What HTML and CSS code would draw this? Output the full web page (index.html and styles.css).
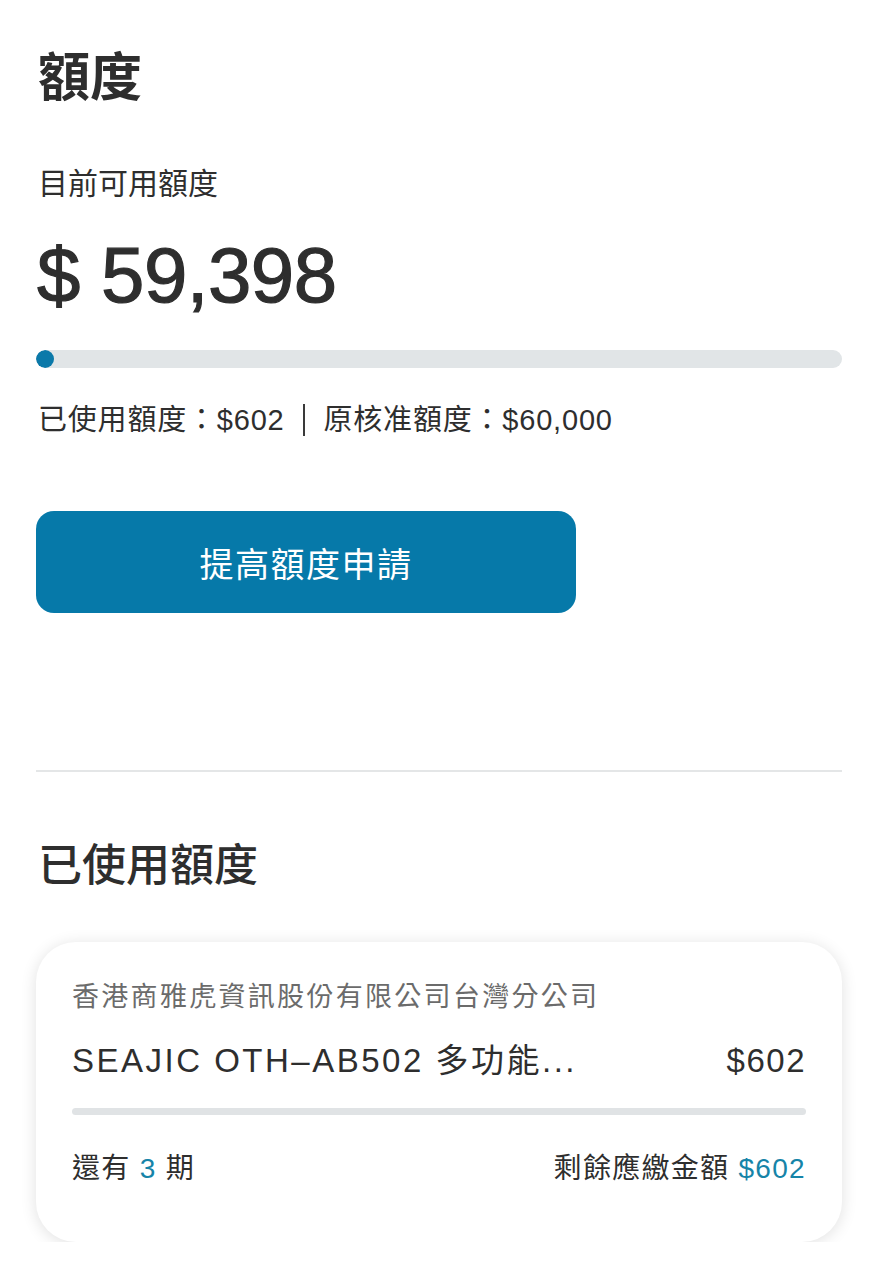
FILE: index.html
```html
<!DOCTYPE html>
<html lang="zh-Hant">
<head>
  <meta charset="UTF-8" />
  <meta name="viewport" content="width=device-width, initial-scale=1.0" />
  <title>額度</title>
  <link rel="stylesheet" href="styles.css">
</head>
<body>
  <section class="quota">
    <h1>額度</h1>
    <p class="label">目前可用額度</p>
    <div class="amount">$ 59,398</div>
    <div class="bar">
      <div class="bar-fill" style="width: 2.2%"></div>
    </div>
    <p class="stats">已使用額度：$602<span class="sep"></span>原核准額度：$60,000</p>
    <button class="btn">提高額度申請</button>
  </section>

  <hr class="divider" />

  <section class="used">
    <h2>已使用額度</h2>
    <div class="card">
      <p class="merchant">香港商雅虎資訊股份有限公司台灣分公司</p>
      <div class="item">
        <span class="item-name">SEAJIC OTH–AB502 多功能...</span>
        <span class="item-price">$602</span>
      </div>
      <div class="item-bar"></div>
      <div class="item-foot">
        <span>還有 <em>3</em> 期</span>
        <span>剩餘應繳金額 <em>$602</em></span>
      </div>
    </div>
  </section>
</body>
</html>
```

FILE: styles.css
```css
body {
  font-family: "Liberation Sans", "Noto Sans CJK TC", sans-serif;
  margin: 0;
  padding: 0 36px;
  color: #2e2e2e;
  background: #fff;
}
h1 {
  font-size: 52px;
  font-weight: 700;
  line-height: 1.2;
  margin: 47px 2px 0;
}
.label {
  font-size: 30px;
  line-height: 1.3;
  margin: 55px 2px 0;
}
.amount {
  font-size: 78px;
  line-height: 1;
  letter-spacing: -0.5px;
  -webkit-text-stroke: 1.2px #2e2e2e;
  margin: 33px 0 0 1px;
}
.bar {
  height: 18px;
  background: #e1e5e7;
  border-radius: 9px;
  margin-top: 36px;
  overflow: hidden;
}
.bar-fill {
  height: 100%;
  background: #0b79a9;
  border-radius: 9px;
}
.stats {
  font-size: 29px;
  line-height: 1.3;
  letter-spacing: 0.8px;
  margin: 34px 2px 0;
}
.sep {
  display: inline-block;
  width: 2px;
  height: 32px;
  background: #3a3a3a;
  margin: 0 19px 0 18px;
  vertical-align: -6px;
}
.btn {
  display: block;
  width: 540px;
  height: 102px;
  margin-top: 71px;
  border: 0;
  border-radius: 18px;
  background: #0679a9;
  color: #fff;
  font-family: inherit;
  font-size: 34px;
  letter-spacing: 1.5px;
}
.divider {
  border: 0;
  border-top: 2px solid #e4e6e7;
  margin: 157px 0 0;
}
h2 {
  font-size: 44px;
  font-weight: 500;
  line-height: 1.2;
  margin: 68px 2px 0;
}
.card {
  margin-top: 49px;
  border-radius: 40px;
  padding: 38px 36px 55px;
  box-shadow: 0 2px 16px rgba(0, 0, 0, 0.12);
}
.merchant {
  font-size: 27px;
  letter-spacing: 2.3px;
  color: #6b6b6b;
  line-height: 1.3;
  margin: 0;
}
.item {
  display: flex;
  justify-content: space-between;
  font-size: 33px;
  letter-spacing: 2.5px;
  line-height: 1.3;
  margin-top: 25px;
}
.item-price {
  letter-spacing: 1.5px;
}
.item-bar {
  height: 7px;
  background: #e0e3e5;
  border-radius: 4px;
  margin-top: 25px;
}
.item-foot {
  display: flex;
  justify-content: space-between;
  font-size: 28px;
  letter-spacing: 1.3px;
  line-height: 1.3;
  margin-top: 36px;
}
.item-foot em {
  font-style: normal;
  color: #1684a8;
}
```
